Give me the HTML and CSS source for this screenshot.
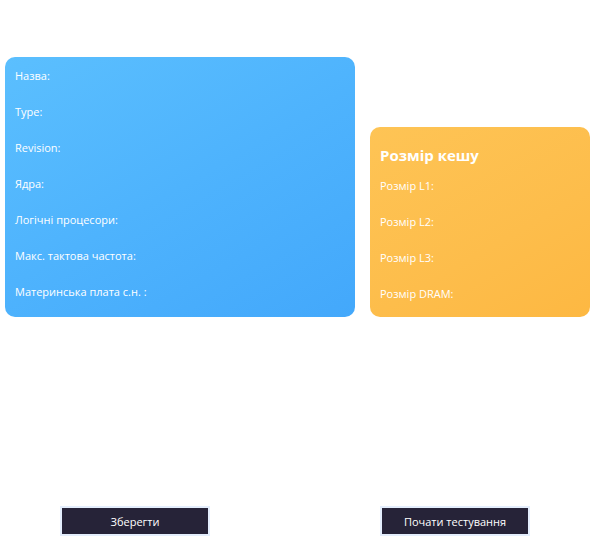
FILE: index.html
```html
<!DOCTYPE html>
<html>
<head>
<meta charset="utf-8">
<link rel="stylesheet" href="styles.css">
</head>
<body>
<div class="page">
  <div class="cards">
    <div class="card card-blue">
      <div class="row">Назва:</div>
      <div class="row">Type:</div>
      <div class="row">Revision:</div>
      <div class="row">Ядра:</div>
      <div class="row">Логічні процесори:</div>
      <div class="row">Макс. тактова частота:</div>
      <div class="row">Материнська плата с.н. :</div>
    </div>
    <div class="card card-orange">
      <div class="title">Розмір кешу</div>
      <div class="row">Розмір L1:</div>
      <div class="row">Розмір L2:</div>
      <div class="row">Розмір L3:</div>
      <div class="row">Розмір DRAM:</div>
    </div>
  </div>
  <div class="actions">
    <button class="btn btn-save">Зберегти</button>
    <button class="btn btn-test">Почати тестування</button>
  </div>
</div>
</body>
</html>
```
FILE: styles.css
```css
html, body {
  margin: 0;
  padding: 0;
  background: #ffffff;
}
body {
  font-family: "Open Sans", "Noto Sans", sans-serif;
  color: #ffffff;
}
.page {
  width: 590px;
  height: 550px;
  display: flex;
  flex-direction: column;
}
.cards {
  display: flex;
  align-items: flex-end;
  gap: 15px;
  padding: 57px 0 0 5px;
}
.card {
  border-radius: 10px;
  box-sizing: border-box;
  display: flex;
  flex-direction: column;
}
.card-blue {
  width: 350px;
  height: 260px;
  padding: 9px 10px 0 10px;
  background: linear-gradient(150deg, #5bbffe 0%, #4eb3fd 50%, #43a8fb 100%);
}
.card-orange {
  width: 220px;
  height: 190px;
  padding: 17px 10px 0 10px;
  background: linear-gradient(150deg, #fec455 0%, #fdbd4b 60%, #fdb842 100%);
}
.row {
  font-size: 11px;
  height: 36px;
  line-height: 20px;
  flex-shrink: 0;
}
.title {
  font-size: 15px;
  font-weight: 700;
  line-height: 22px;
  height: 32px;
  flex-shrink: 0;
}
.actions {
  margin-top: auto;
  display: flex;
  padding: 0 0 14px 60px;
  gap: 170px;
}
.btn {
  width: 150px;
  height: 30px;
  background: #262338;
  border: 2px solid #e4eefd;
  color: #ffffff;
  font-family: "Open Sans", "Noto Sans", sans-serif;
  font-size: 11px;
  padding: 0;
}
```
